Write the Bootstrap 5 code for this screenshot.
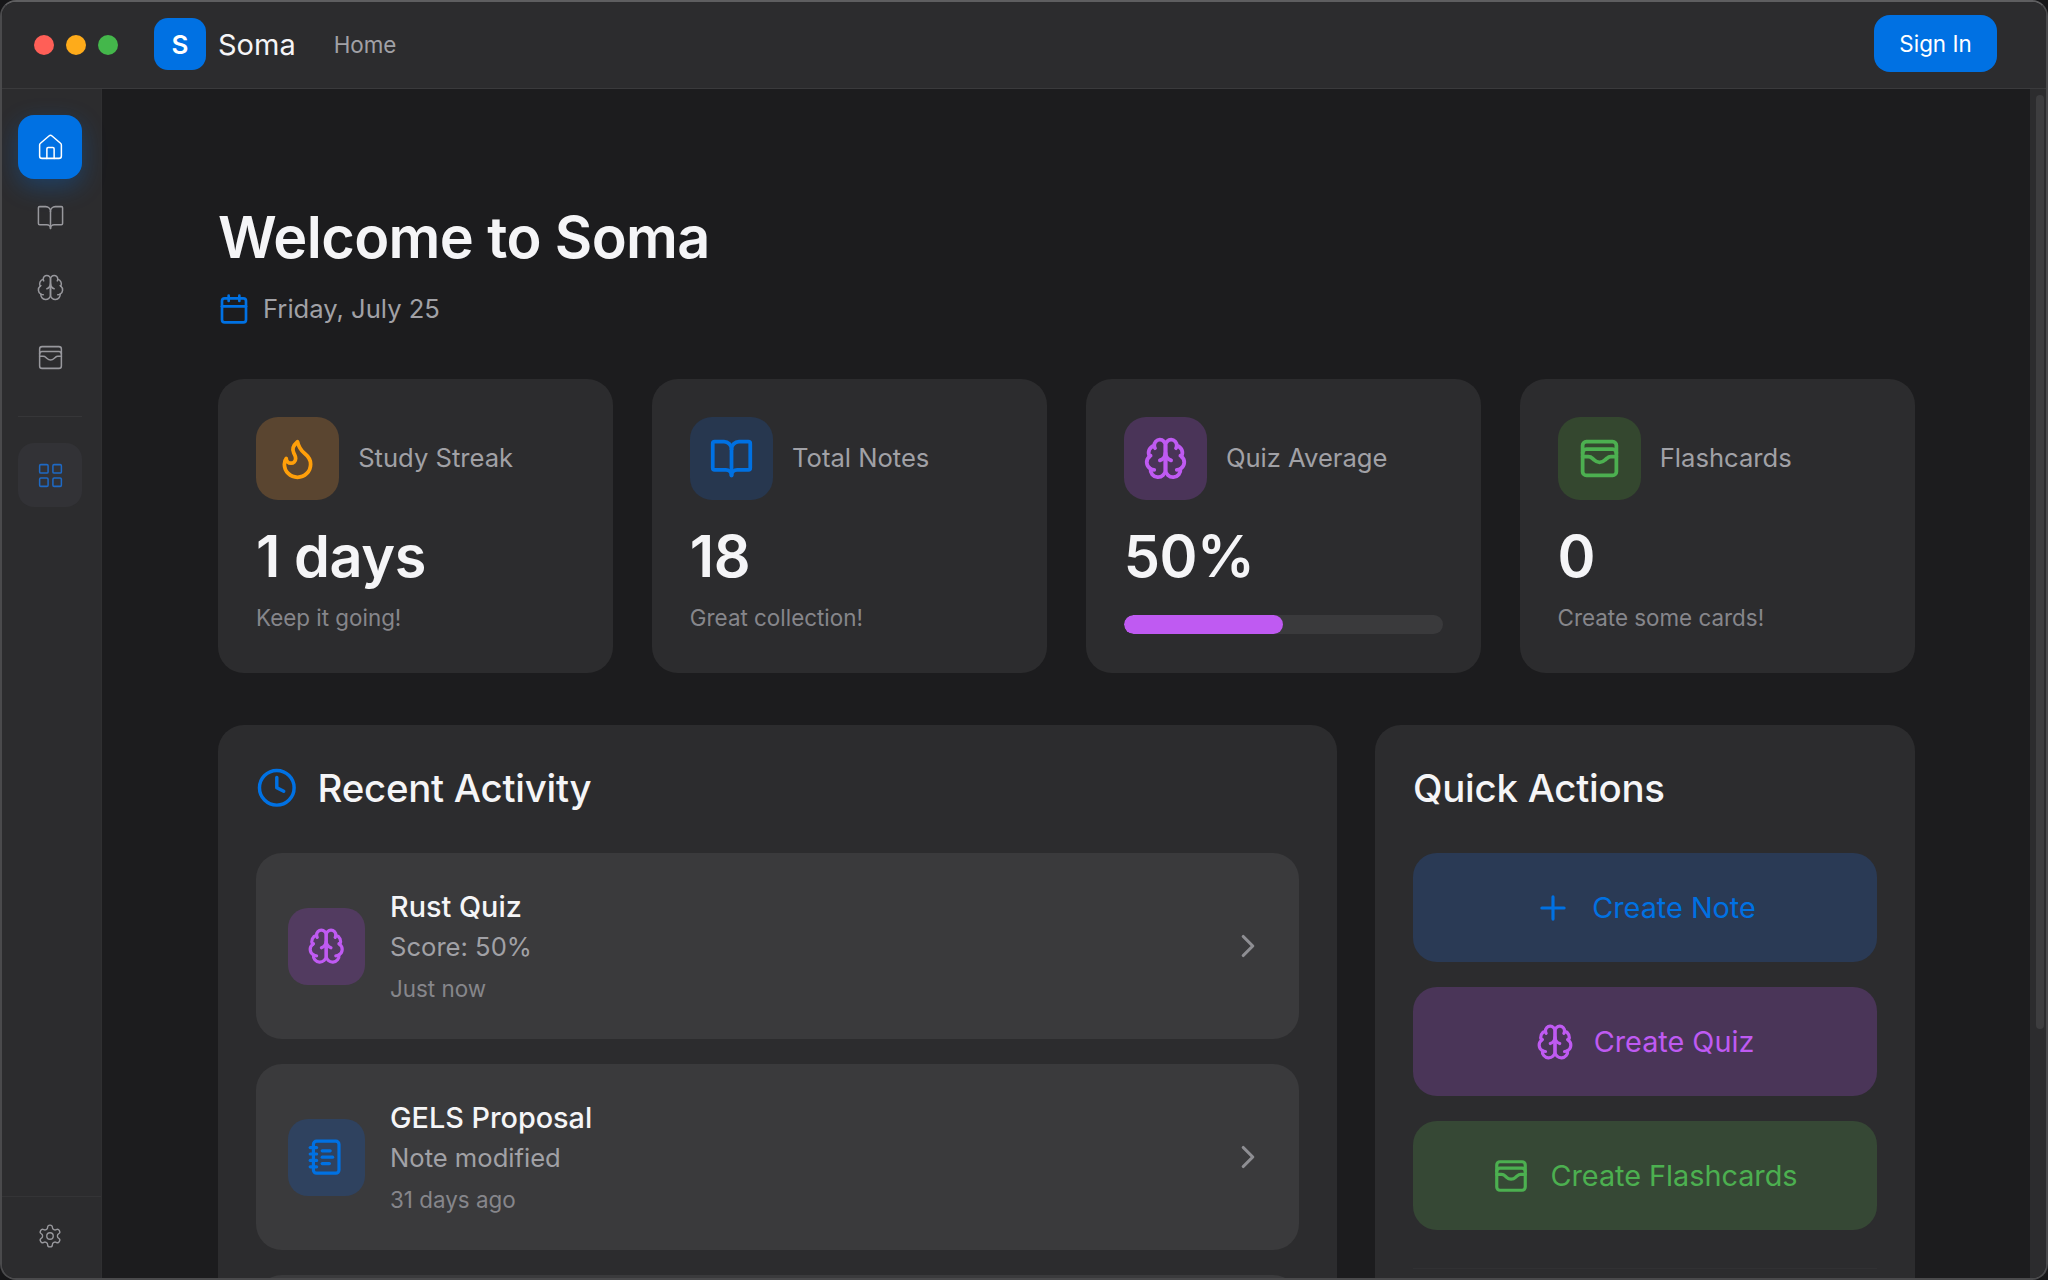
<!DOCTYPE html>
<html lang="en">
<head>
<meta charset="utf-8">
<title>Soma</title>
<link rel="stylesheet" href="https://cdn.jsdelivr.net/npm/bootstrap@5.3.0/dist/css/bootstrap.min.css">
<style>
html,body{height:100%;margin:0;background:#161618;overflow:hidden}
body{font-family:Inter,"Liberation Sans",sans-serif;color:#f5f5f7}
svg.ico{fill:none;stroke:currentColor;stroke-width:2;stroke-linecap:round;stroke-linejoin:round;flex:none;display:block}
.win{height:1280px;border:2px solid #4a4a4c;border-top-color:#5e5e60;border-radius:16px;overflow:hidden;background:#1c1c1e}
.topbar{height:87px;background:#2c2c2e;border-bottom:1px solid #3a3a3c;padding:0 49px 0 32px;flex:none}
.lights{gap:12px}
.tl{width:20px;height:20px;border-radius:50%}
.tl-r{background:#ff5f57}.tl-y{background:#feab1a}.tl-g{background:#44b74b}
.logo{width:52px;height:52px;border-radius:14px;background:#0071e3;color:#fff;font-size:26px;font-weight:600;margin-left:36px;margin-top:-2px}
.brand{font-size:29px;margin-left:12px;color:#f5f5f7;line-height:1;margin-top:-2px}
.homelink{font-size:22.4px;color:#a1a1a6;margin-left:38px;text-decoration:none}
.signin{background:#0071e3;color:#fff;border:0;border-radius:16px;font-size:22.4px;width:123px;height:57px;padding:0;margin-top:-3px}
.signin:hover{background:#0071e3;color:#fff}
.side{width:100px;background:#2c2c2e;flex:none;border-right:1px solid #2f2f31}
.side svg.ico{stroke-width:1.25}
.navstack{padding:26px 3px 0 0}
.nb{width:64px;height:64px;border-radius:16px;color:#98989d;flex:none}
.nb-next{margin-top:6px}
.nb-on{background:#0071e3;color:#fff;box-shadow:0 8px 24px rgba(0,113,227,.3)}
.nb-grid{background:#323236;color:#1e69c4;margin-top:26px}
.sep{height:1px;width:64px;background:#363638;margin-top:27px}
.sidefoot{border-top:1px solid #343436;height:82px;color:#98989d;width:100%;padding:0 3px 4px 0}
.scrollarea{width:16px;flex:none;background:#2c2c2e;padding:6px 2px 0 6px}
.thumb{height:934px;background:#3d3d3f;border-radius:4px}
.pagewrap{padding:0 115px 0 116px;overflow:hidden;min-width:0}
.pagetitle{font-size:57.6px;font-weight:600;line-height:1.2;margin:114px 0 0;letter-spacing:-.6px;color:#f5f5f7}
.dateline{font-size:25.6px;color:#a1a1a6;margin-top:19px;gap:13px;height:36px}
.c-blue{color:#0071e3}.c-purple{color:#bf5af2}.c-green{color:#4cb050}.c-orange{color:#ff9f0a}
.statgrid{display:grid;grid-template-columns:repeat(4,1fr);gap:38.4px;margin-top:52px}
.stat{background:#2c2c2e;border:0;border-radius:26px;padding:38px;height:294px}
.ibox{width:83px;height:83px;border-radius:22px;flex:none}
.b-orange{background:#5a4530}.b-blue{background:#27374f}.b-purple{background:#4a3458}.b-green{background:#34472f}
.statlabel{font-size:25.6px;color:#a1a1a6;margin-left:19.2px}
.statval{font-size:57.6px;font-weight:600;line-height:1;margin-top:28px;letter-spacing:-.4px;color:#f5f5f7}
.statsub{font-size:22.4px;color:#86868b;margin-top:17px;line-height:1.3}
.bar{height:19px;background:#3a3a3c;border-radius:10px;margin-top:29px}
.bar .progress-bar{background:#bf5af2;border-radius:10px}
.lower{display:grid;grid-template-columns:1fr 540px;gap:38.4px;margin-top:52px;align-items:start}
.panel{background:#2c2c2e;border:0;border-radius:26px;padding:38px;height:1000px}
.headrow{gap:20px}
.ptitle{font-size:38.4px;font-weight:500;line-height:1.2;margin:0;color:#f5f5f7;height:50px;letter-spacing:-.25px}
.act{background:#3a3a3c;border-radius:26px;height:186px;padding:0 32px;margin-top:25px;flex:none}
.act-first{margin-top:40px}
.abox{width:77px;height:77px;border-radius:20px;flex:none;margin-right:25px}
.ab-purple{background:#523b60}.ab-blue{background:#2f425f}
.atitle{font-size:28.8px;font-weight:500;line-height:1.25;color:#f5f5f7}
.asub{font-size:25.6px;line-height:1.3;color:#a1a1a6;margin-top:5px}
.atime{font-size:22.4px;line-height:1.3;color:#86868b;margin-top:11px}
.chev{color:#8e8e93}
.qa{height:109px;border-radius:24px;font-size:28.8px;gap:20px;border:0;margin-top:25px;width:100%;flex:none}
.qa-first{margin-top:40px}
.qa-b{background:#2a3a55;color:#0071e3}.qa-p{background:#4a3558;color:#bf5af2}.qa-g{background:#364835;color:#4cb050}
.qa-b:hover{background:#2a3a55;color:#0071e3}.qa-p:hover{background:#4a3558;color:#bf5af2}.qa-g:hover{background:#364835;color:#4cb050}
.faint{border-top:1px solid #313133;margin-top:38px}
</style>
</head>
<body>
<svg width="0" height="0" class="position-absolute">
<defs>
<symbol id="i-home" viewBox="0 0 24 24"><path d="M15 21v-8a1 1 0 0 0-1-1h-4a1 1 0 0 0-1 1v8"/><path d="M3 10a2 2 0 0 1 .709-1.528l7-5.999a2 2 0 0 1 2.582 0l7 5.999A2 2 0 0 1 21 10v9a2 2 0 0 1-2 2H5a2 2 0 0 1-2-2z"/></symbol>
<symbol id="i-book" viewBox="0 0 24 24"><path d="M12 7v14"/><path d="M3 18a1 1 0 0 1-1-1V4a1 1 0 0 1 1-1h5a4 4 0 0 1 4 4 4 4 0 0 1 4-4h5a1 1 0 0 1 1 1v13a1 1 0 0 1-1 1h-6a3 3 0 0 0-3 3 3 3 0 0 0-3-3z"/></symbol>
<symbol id="i-brain" viewBox="0 0 24 24"><path d="M12 5a3 3 0 1 0-5.997.125 4 4 0 0 0-2.526 5.77 4 4 0 0 0 .556 6.588A4 4 0 1 0 12 18Z"/><path d="M12 5a3 3 0 1 1 5.997.125 4 4 0 0 1 2.526 5.77 4 4 0 0 1-.556 6.588A4 4 0 1 1 12 18Z"/><path d="M15 13a4.5 4.5 0 0 1-3-4 4.5 4.5 0 0 1-3 4"/><path d="M17.599 6.5a3 3 0 0 0 .399-1.375"/><path d="M6.003 5.125A3 3 0 0 0 6.401 6.5"/><path d="M3.477 10.896a4 4 0 0 1 .585-.396"/><path d="M19.938 10.5a4 4 0 0 1 .585.396"/><path d="M6 18a4 4 0 0 1-1.967-.516"/><path d="M19.967 17.484A4 4 0 0 1 18 18"/></symbol>
<symbol id="i-wallet" viewBox="0 0 24 24"><rect width="18" height="18" x="3" y="3" rx="2"/><path d="M3 9a2 2 0 0 1 2-2h14a2 2 0 0 1 2 2"/><path d="M3 11h3c.8 0 1.6.3 2.1.9l1.1.9c1.6 1.6 4.1 1.6 5.7 0l1.1-.9c.5-.5 1.3-.9 2.1-.9H21"/></symbol>
<symbol id="i-grid" viewBox="0 0 24 24"><rect width="7" height="7" x="3" y="3" rx="1"/><rect width="7" height="7" x="14" y="3" rx="1"/><rect width="7" height="7" x="14" y="14" rx="1"/><rect width="7" height="7" x="3" y="14" rx="1"/></symbol>
<symbol id="i-gear" viewBox="0 0 24 24"><path d="M12.22 2h-.44a2 2 0 0 0-2 2v.18a2 2 0 0 1-1 1.73l-.43.25a2 2 0 0 1-2 0l-.15-.08a2 2 0 0 0-2.73.73l-.22.38a2 2 0 0 0 .73 2.73l.15.1a2 2 0 0 1 1 1.72v.51a2 2 0 0 1-1 1.74l-.15.09a2 2 0 0 0-.73 2.73l.22.38a2 2 0 0 0 2.73.73l.15-.08a2 2 0 0 1 2 0l.43.25a2 2 0 0 1 1 1.73V20a2 2 0 0 0 2 2h.44a2 2 0 0 0 2-2v-.18a2 2 0 0 1 1-1.73l.43-.25a2 2 0 0 1 2 0l.15.08a2 2 0 0 0 2.73-.73l.22-.39a2 2 0 0 0-.73-2.73l-.15-.08a2 2 0 0 1-1-1.74v-.5a2 2 0 0 1 1-1.74l.15-.09a2 2 0 0 0 .73-2.73l-.22-.38a2 2 0 0 0-2.73-.73l-.15.08a2 2 0 0 1-2 0l-.43-.25a2 2 0 0 1-1-1.73V4a2 2 0 0 0-2-2z"/><circle cx="12" cy="12" r="3"/></symbol>
<symbol id="i-cal" viewBox="0 0 24 24"><path d="M8 2v4"/><path d="M16 2v4"/><rect width="18" height="18" x="3" y="4" rx="2"/><path d="M3 10h18"/></symbol>
<symbol id="i-flame" viewBox="0 0 24 24"><path d="M8.5 14.5A2.5 2.5 0 0 0 11 12c0-1.38-.5-2-1-3-1.072-2.143-.224-4.054 2-6 .5 2.5 2 4.9 4 6.5 2 1.6 3 3.5 3 5.5a7 7 0 1 1-14 0c0-1.153.433-2.294 1-3a2.5 2.5 0 0 0 2.5 2.5z"/></symbol>
<symbol id="i-clock" viewBox="0 0 24 24"><circle cx="12" cy="12" r="10"/><path d="M12 6v6l4 2"/></symbol>
<symbol id="i-note" viewBox="0 0 24 24"><path d="M2 6h4"/><path d="M2 10h4"/><path d="M2 14h4"/><path d="M2 18h4"/><rect width="16" height="20" x="4" y="2" rx="2"/><path d="M9.5 8h5"/><path d="M9.5 12H16"/><path d="M9.5 16H14"/></symbol>
<symbol id="i-chev" viewBox="0 0 24 24"><path d="m9 18 6-6-6-6"/></symbol>
<symbol id="i-plus" viewBox="0 0 24 24"><path d="M5 12h14"/><path d="M12 5v14"/></symbol>
</defs>
</svg>

<div class="win d-flex flex-column">
  <header class="topbar d-flex align-items-center">
    <div class="lights d-flex align-items-center">
      <span class="tl tl-r"></span><span class="tl tl-y"></span><span class="tl tl-g"></span>
    </div>
    <div class="logo d-flex align-items-center justify-content-center">S</div>
    <span class="brand">Soma</span>
    <a class="homelink" href="#">Home</a>
    <button class="btn signin ms-auto" type="button">Sign In</button>
  </header>

  <div class="d-flex flex-grow-1 overflow-hidden">
    <nav class="side d-flex flex-column align-items-center">
      <div class="navstack d-flex flex-column align-items-center flex-grow-1">
        <div class="nb nb-on d-flex align-items-center justify-content-center"><svg class="ico" width="29" height="29"><use href="#i-home"/></svg></div>
        <div class="nb nb-next d-flex align-items-center justify-content-center"><svg class="ico" width="29" height="29"><use href="#i-book"/></svg></div>
        <div class="nb nb-next d-flex align-items-center justify-content-center"><svg class="ico" width="29" height="29"><use href="#i-brain"/></svg></div>
        <div class="nb nb-next d-flex align-items-center justify-content-center"><svg class="ico" width="29" height="29"><use href="#i-wallet"/></svg></div>
        <div class="sep"></div>
        <div class="nb nb-grid d-flex align-items-center justify-content-center"><svg class="ico" width="29" height="29"><use href="#i-grid"/></svg></div>
      </div>
      <div class="sidefoot d-flex align-items-center justify-content-center"><svg class="ico" width="26" height="26"><use href="#i-gear"/></svg></div>
    </nav>

    <main class="flex-grow-1 pagewrap">
      <h1 class="pagetitle">Welcome to Soma</h1>
      <div class="dateline d-flex align-items-center"><svg class="ico c-blue" width="32" height="32"><use href="#i-cal"/></svg><span>Friday, July 25</span></div>

      <section class="statgrid">
        <div class="card stat">
          <div class="d-flex align-items-center"><div class="ibox b-orange c-orange d-flex align-items-center justify-content-center"><svg class="ico" width="45" height="45"><use href="#i-flame"/></svg></div><span class="statlabel">Study Streak</span></div>
          <div class="statval">1 days</div>
          <div class="statsub">Keep it going!</div>
        </div>
        <div class="card stat">
          <div class="d-flex align-items-center"><div class="ibox b-blue c-blue d-flex align-items-center justify-content-center"><svg class="ico" width="45" height="45"><use href="#i-book"/></svg></div><span class="statlabel">Total Notes</span></div>
          <div class="statval">18</div>
          <div class="statsub">Great collection!</div>
        </div>
        <div class="card stat">
          <div class="d-flex align-items-center"><div class="ibox b-purple c-purple d-flex align-items-center justify-content-center"><svg class="ico" width="45" height="45"><use href="#i-brain"/></svg></div><span class="statlabel">Quiz Average</span></div>
          <div class="statval">50%</div>
          <div class="progress bar"><div class="progress-bar" style="width:50%"></div></div>
        </div>
        <div class="card stat">
          <div class="d-flex align-items-center"><div class="ibox b-green c-green d-flex align-items-center justify-content-center"><svg class="ico" width="45" height="45"><use href="#i-wallet"/></svg></div><span class="statlabel">Flashcards</span></div>
          <div class="statval">0</div>
          <div class="statsub">Create some cards!</div>
        </div>
      </section>

      <section class="lower">
        <div class="card panel">
          <div class="headrow d-flex align-items-center"><svg class="ico c-blue" width="41.6" height="41.6"><use href="#i-clock"/></svg><h2 class="ptitle d-flex align-items-center">Recent Activity</h2></div>
          <div class="act act-first d-flex align-items-center">
            <div class="abox ab-purple c-purple d-flex align-items-center justify-content-center"><svg class="ico" width="38.4" height="38.4"><use href="#i-brain"/></svg></div>
            <div class="flex-grow-1"><div class="atitle">Rust Quiz</div><div class="asub">Score: 50%</div><div class="atime">Just now</div></div>
            <svg class="ico chev" width="38" height="38"><use href="#i-chev"/></svg>
          </div>
          <div class="act d-flex align-items-center">
            <div class="abox ab-blue c-blue d-flex align-items-center justify-content-center"><svg class="ico" width="38.4" height="38.4"><use href="#i-note"/></svg></div>
            <div class="flex-grow-1"><div class="atitle">GELS Proposal</div><div class="asub">Note modified</div><div class="atime">31 days ago</div></div>
            <svg class="ico chev" width="38" height="38"><use href="#i-chev"/></svg>
          </div>
          <div class="act"></div>
        </div>
        <div class="card panel">
          <h2 class="ptitle d-flex align-items-center">Quick Actions</h2>
          <button class="btn qa qa-b qa-first d-flex align-items-center justify-content-center" type="button"><svg class="ico" width="38" height="38"><use href="#i-plus"/></svg><span>Create Note</span></button>
          <button class="btn qa qa-p d-flex align-items-center justify-content-center" type="button"><svg class="ico" width="38" height="38"><use href="#i-brain"/></svg><span>Create Quiz</span></button>
          <button class="btn qa qa-g d-flex align-items-center justify-content-center" type="button"><svg class="ico" width="38" height="38"><use href="#i-wallet"/></svg><span>Create Flashcards</span></button>
          <div class="faint"></div>
        </div>
      </section>
    </main>

    <div class="scrollarea"><div class="thumb"></div></div>
  </div>
</div>
</body>
</html>
